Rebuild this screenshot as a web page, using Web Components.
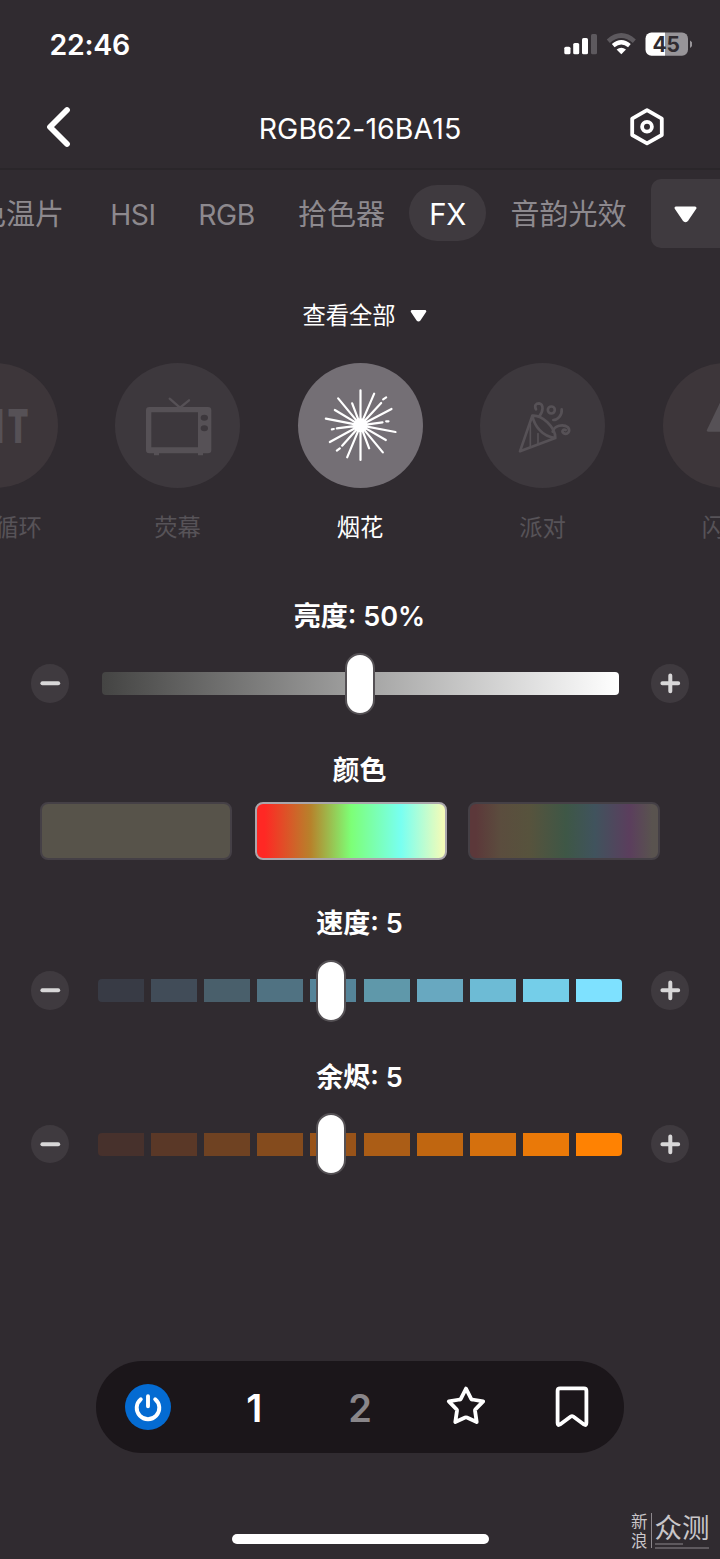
<!DOCTYPE html>
<html lang="zh-CN">
<head>
<meta charset="utf-8">
<title>RGB62-16BA15</title>
<style>
html,body{margin:0;background:#302b30}
body{width:720px;height:1559px;overflow:hidden;color:#fff;font-family:Inter,"Noto Sans CJK SC",sans-serif}
</style>
</head>
<body>
<light-app></light-app>
<script>
function define(name, css, html) {
  customElements.define(name, class extends HTMLElement {
    constructor() {
      super();
      this.attachShadow({mode: 'open'});
    }
    connectedCallback() {
      if (this.shadowRoot.childNodes.length) return;
      const t = document.createElement('template');
      t.innerHTML = '<style>*{box-sizing:border-box}svg{display:block}' + css + '</style>' + (typeof html === 'function' ? html(this) : html);
      this.shadowRoot.append(t.content.cloneNode(true));
    }
  });
}

define('status-bar', `
:host{display:flex;height:90px;padding:0 28px 0 49.5px;align-items:center;justify-content:space-between}
.time{font-size:28.5px;font-weight:600;letter-spacing:-.3px;margin-top:-2px}
.icons{display:flex}`,
`<span class="time">22:46</span>
<svg class="icons" width="132" height="30" viewBox="560 30 132 30">
  <g fill="#fff"><rect x="564.3" y="46.7" width="6.2" height="7.6" rx="1.6"/><rect x="573.2" y="43" width="6" height="11.3" rx="1.6"/><rect x="582" y="38" width="6" height="16.3" rx="1.6"/></g>
  <rect x="591" y="34" width="6" height="20.3" rx="1.6" fill="#5d595e"/>
  <path d="M608.3 41.2Q621.3 29.8 634.3 41.2" fill="none" stroke="#5d595e" stroke-width="4.6"/>
  <path d="M613.2 45.6Q621.3 38.8 629.4 45.6" fill="none" stroke="#fff" stroke-width="4.2"/>
  <path d="M616.6 49.4Q621.3 46 626 49.4L621.3 54.3Z" fill="#fff"/>
  <clipPath id="b"><rect x="645.5" y="32.5" width="42.5" height="23.3" rx="6"/></clipPath>
  <g clip-path="url(#b)"><rect x="645" y="32" width="20" height="25" fill="#fff"/><rect x="665" y="32" width="24" height="25" fill="#989599"/></g>
  <path d="M690 40.5Q692.5 42 692.5 44.2Q692.5 46.5 690 48Z" fill="#989599"/>
  <text x="666.2" y="52" text-anchor="middle" font-size="21" font-weight="700" fill="#302b30">45</text>
</svg>`);

define('nav-header', `
:host{display:grid;grid-template-columns:100px 1fr 100px;height:80px;align-items:center;border-bottom:2px solid #2a262a}
.t{text-align:center;font-size:28.5px;line-height:36px;letter-spacing:.05px}
svg{margin-top:-4px}`,
`<svg width="100" height="60" viewBox="0 97 100 60"><path d="M67 110L50 127L67 144" fill="none" stroke="#fff" stroke-width="5.8" stroke-linecap="round" stroke-linejoin="round"/></svg>
<div class="t"><slot></slot></div>
<svg width="100" height="60" viewBox="620 97 100 60"><g fill="none" stroke="#fff" stroke-width="3.8" stroke-linejoin="round"><path d="M647 110.2L661.8 118.6V135L647 143.3L632.2 135V118.6Z"/><circle cx="647" cy="126.8" r="4.9"/></g></svg>`);

define('tab-item', `
:host{display:flex;height:56px;padding:3px 0 0 0;align-items:center;justify-content:center;white-space:nowrap;color:#8d898e;font-size:29px;line-height:34px}
:host([latin]){font-size:28.3px;letter-spacing:-.5px}
:host([active]){background:#3f3a3f;color:#fff;border-radius:28px;font-size:29.3px;letter-spacing:-.4px}`,
`<slot></slot>`);

define('mode-tabs', `
:host{display:grid;grid-template-columns:133px 92px 95px 135px 77px 165px 69px;margin-left:-46px;height:88px;padding-top:9px}
tab-item{margin-top:6px}
.drop{background:#3f3a3f;border-radius:10px 0 0 10px;height:69px;width:70px;display:grid;align-items:center}`,
`<tab-item>色温片</tab-item><tab-item latin>HSI</tab-item><tab-item latin>RGB</tab-item><tab-item>拾色器</tab-item><tab-item active>FX</tab-item><tab-item>音韵光效</tab-item>
<div class="drop"><svg width="69" height="30" viewBox="651 199 69 30"><path d="M676 208H695L687.2 219.5Q685.5 221.8 683.8 219.5Z" fill="#fff" stroke="#fff" stroke-width="3" stroke-linejoin="round"/></svg></div>`);

define('view-all', `
:host{display:flex;height:105px;padding:7px 0 0 9px;align-items:center;justify-content:center;gap:14px;font-size:23.3px}
svg{margin-top:3px}`,
`<span><slot></slot></span><svg width="17" height="14" viewBox="0 0 17 14"><path d="M2 2.4H15L9.5 10.6Q8.5 11.7 7.5 10.6Z" fill="#fff" stroke="#fff" stroke-width="2.6" stroke-linejoin="round"/></svg>`);

const icons = {
  word: `<text y="241" font-size="141" font-weight="900"><tspan x="178" textLength="36" lengthAdjust="spacingAndGlyphs">I</tspan><tspan x="224" textLength="62" lengthAdjust="spacingAndGlyphs">T</tspan></text>`,
  tv: `<g transform="translate(-345 -218)"><path fill-rule="evenodd" d="M448 350H624Q634 350 634 360V479Q634 489 624 489H448Q438 489 438 479V360Q438 350 448 350ZM454 366V471H594V366ZM602 382a11 9 0 1 0 22 0a11 9 0 1 0-22 0ZM602 414a11 9 0 1 0 22 0a11 9 0 1 0-22 0Z"/><path d="M462 488H477V495H462ZM594 488H609V495H594Z"/><path d="M509 325L540 352L567 330" fill="none" stroke="currentColor" stroke-width="7" stroke-linecap="round"/></g>`,
  firework: `<g transform="translate(-52.5 -219)" fill="none" stroke="currentColor" stroke-width="6.6" stroke-linecap="round"><path d="M240 406V301M240 406L281 311M240 406L302 339M308 328L317 322M240 406L333 357M240 406L306 397M317 394H324M240 406L345 426M240 406L316 450M240 406L307 487M240 406L266 475M240 406V510M240 406L200 502M240 406L185 467M169 482L178 475M240 406L148 456M240 406L169 415M154 418L160 417M240 406L136 386M240 406L163 360M240 406L173 325M240 406L215 340"/><circle cx="240" cy="406" r="21" fill="currentColor" stroke="none"/></g>`,
  party: `<g transform="translate(-60 -38)" fill="none" stroke="currentColor" stroke-width="8" stroke-linecap="round" stroke-linejoin="round"><path d="M217 196L180 303L286 263M217 196C223 225 245 258 286 263M217 196C245 193 286 230 286 263"/><path stroke-width="5" d="M211 222V290M234 250V280"/><path d="M228 177C222 165 228 159 237 159C252 161 250 185 237 199M278 244C283 226 309 219 324 231C333 243 322 255 310 248C304 243 310 235 317 239"/><circle cx="274" cy="179" r="10.5"/><path d="M305 177C307 194 293 209 280 209"/></g>`,
  flash: `<g transform="translate(-608 -38)"><path d="M792 130L740 238Q738 244 745 244H845Q852 244 850 238L798 130Q795 125 792 130Z"/></g>`
};
define('effect-item', `
:host{display:flex;flex-direction:column;align-items:center;width:125px;flex:none;color:#575358;font-size:23.3px;white-space:nowrap}
.disc{width:125px;height:125px;border-radius:50%;background:#3d383d;color:#565156}
:host([warm]) .disc{background:#3d363a}
:host([active]){color:#fff}
:host([active]) .disc{background:#746f75;color:#fff}
.l{margin-top:23px;line-height:34px}
:host([tail]) .l{padding-left:47px}`,
h => `<div class="disc"><svg width="125" height="125" viewBox="0 0 375 375" fill="currentColor">${icons[h.getAttribute('icon')]}</svg></div><div class="l"><slot></slot></div>`);

define('effect-carousel', `:host{display:flex;gap:57.5px;margin-left:-67.5px;width:855px;height:229px}`,
`<effect-item icon="word" warm tail>循环</effect-item><effect-item icon="tv">荧幕</effect-item><effect-item icon="firework" active>烟花</effect-item><effect-item icon="party">派对</effect-item><effect-item icon="flash" warm>闪电</effect-item>`);

define('step-button', `:host{display:block;width:38.6px;height:38.6px;border-radius:50%;background:#3f3a3f}`,
h => `<svg width="38.6" height="38.6" viewBox="0 0 38.6 38.6"><path d="M11.4 19.3H27.2${h.hasAttribute('plus') ? 'M19.3 11.4V27.2' : ''}" stroke="#d8d7d8" stroke-width="4" stroke-linecap="round"/></svg>`);

define('control-block', `
:host{display:block;height:153.5px}
.l{height:50px;line-height:50px;text-align:center;font-size:27px;font-weight:600;white-space:pre;padding-right:1px}`,
`<div class="l"><slot name="label"></slot></div><slot></slot>`);

define('level-slider', `
:host{display:flex;height:83.4px;align-items:center;justify-content:space-between;padding:0 30.7px}
.track{position:relative;display:flex;height:23px;width:517px;border-radius:4px;background:linear-gradient(90deg,#444443,#fff)}
.track.seg{width:524.4px;gap:7.2px;background:none}
i{flex:1}
i:first-child{border-radius:4px 0 0 4px}i:nth-child(10){border-radius:0 4px 4px 0}
.knob{position:absolute;top:50%;width:30px;height:62px;margin:-31px 0 0 -15px;border:2px solid #555155;border-radius:15px;background:#fff}`,
h => {
  const colors = (h.getAttribute('colors') || '').split(' ').filter(Boolean);
  return `<step-button></step-button><div class="track${colors.length ? ' seg' : ''}">${colors.map(c => `<i style="background:${c}"></i>`).join('')}<div class="knob" style="left:${h.getAttribute('at')}"></div></div><step-button plus></step-button>`;
});

define('color-swatches', `
:host{display:flex;justify-content:space-between;padding:6.5px 60px 0 40px}
div{width:192px;height:58px;border:2px solid #454046;border-radius:8px;background-origin:border-box}
.a{background-color:#57534a}
.b{margin-left:2px;border-color:#aaa6ab;background-image:linear-gradient(90deg,#ff2824 5%,#b7822b 29%,#7dff76 50%,#78fff1 76%,#f3fbb8 98%)}
.c{background-image:linear-gradient(90deg,#5c383a 4%,#5b4d3e 17%,#57533d 32%,#3e5746 51%,#40535d 66%,#5b3e5d 84%,#59534f 96%)}`,
`<div class="a"></div><div class="b"></div><div class="c"></div>`);

define('bottom-dock', `
:host{display:grid;grid-template-columns:repeat(5,1fr);align-items:center;justify-items:center;width:528px;height:92px;margin:155px auto 0;border-radius:46px;background:#1b161a;font-size:38px;font-weight:600}
span{padding-top:1px}
.off{color:#89868a}
.power{margin-right:1px}.mark{margin-left:1px}`,
`<svg class="power" width="46" height="46" viewBox="0 0 46 46"><circle cx="23" cy="23" r="23" fill="#046bd2"/><path d="M15.8 15.2A11.3 11.3 0 1 0 30.2 15.2M23 12.2V22.2" fill="none" stroke="#fff" stroke-width="3.9" stroke-linecap="round"/></svg>
<span>1</span><span class="off">2</span>
<svg width="42" height="42" viewBox="0 0 42 42"><path d="M21 2.6L26.2 12.8Q26.5 13.4 27.2 13.5L38.2 15.4L30.4 23.3Q29.9 23.8 30 24.6L31.7 36L21.9 31.5Q21 31.1 20.1 31.5L10.3 36L12 24.6Q12.1 23.8 11.6 23.3L3.8 15.4L14.8 13.5Q15.5 13.4 15.8 12.8Z" fill="none" stroke="#fff" stroke-width="3.8" stroke-linejoin="round"/></svg>
<svg class="mark" width="34" height="42" viewBox="0 0 34 42"><path d="M5 2.3H29Q31.4 2.3 31.4 4.7V37Q31.4 40 29 38.5L18.2 30.5Q17 29.7 15.8 30.5L5 38.5Q2.6 40 2.6 37V4.7Q2.6 2.3 5 2.3Z" fill="none" stroke="#fff" stroke-width="3.8" stroke-linejoin="round"/></svg>`);

define('site-mark', `
:host{position:absolute;left:631px;top:1513px;display:flex;color:#c9c6c9;height:38px}
.s{width:20.5px;font-size:16.5px;line-height:18.5px;border-right:1px solid #8d888d;height:35px}
.b{margin-left:3px;font-size:27.5px;line-height:30px;white-space:nowrap}
.u{display:block;width:54px;height:6px;border-bottom:2px solid #5e595e}
.u:before{content:"";display:block;width:28px;border-top:2px solid #5e595e}`,
`<div class="s">新<br>浪</div><div class="b">众测<span class="u"></span></div>`);

define('light-app', `
:host{display:flex;flex-direction:column;position:relative;width:720px;height:1559px;background:#302b30;overflow:hidden}
:host>*{flex:none}
.home{width:257px;height:9.6px;border-radius:5px;background:#fff;margin:81px auto 0}`,
`<status-bar></status-bar>
<nav-header>RGB62-16BA15</nav-header>
<mode-tabs></mode-tabs>
<view-all>查看全部</view-all>
<effect-carousel></effect-carousel>
<control-block><span slot="label">亮度: 50%</span><level-slider at="50%"></level-slider></control-block>
<control-block><span slot="label">颜色</span><color-swatches></color-swatches></control-block>
<control-block><span slot="label">速度: 5</span><level-slider at="44.4%" colors="#383b45 #414c58 #495f6b #507282 #558499 #5f98aa #68a8c0 #6dbbd5 #74cee9 #7ee1ff"></level-slider></control-block>
<control-block><span slot="label">余烬: 5</span><level-slider at="44.4%" colors="#47312c #5a3827 #6f4222 #844b1d #985319 #ab5d16 #c06610 #d5700d #ea7908 #ff8202"></level-slider></control-block>
<bottom-dock></bottom-dock>
<div class="home"></div>
<site-mark></site-mark>`);
</script>
</body>
</html>
